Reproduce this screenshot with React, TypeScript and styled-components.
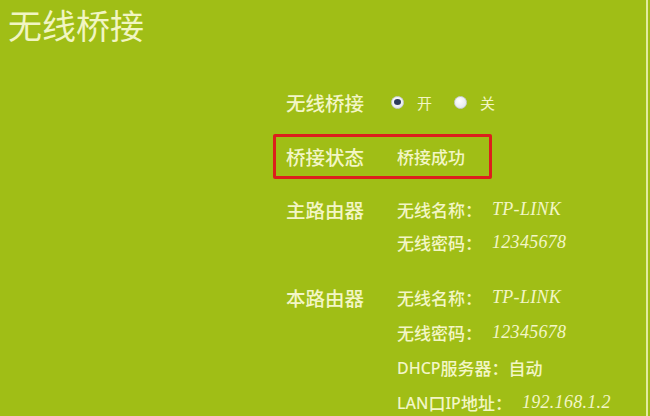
import React from "react";
import styled, { createGlobalStyle } from "styled-components";

const Global = createGlobalStyle`
  html, body { margin: 0; padding: 0; }
  body {
    width: 650px;
    height: 416px;
    overflow: hidden;
    background: #a0be16;
    font-family: "Noto Sans CJK SC", "Noto Sans", sans-serif;
  }
`;

const Page = styled.div`
  width: 646px;
  height: 416px;
  border-right: 2px solid #e2eba0;
  background: #a0be16;
  color: #f3f6c6;
  display: flex;
  flex-direction: column;
  overflow: hidden;
`;

const Title = styled.h1`
  margin: 0;
  padding-left: 8px;
  line-height: 49px;
  font-size: 34px;
  font-weight: 400;
  color: #f1f5c2;
`;

const Form = styled.div`
  margin-top: 36px;
  padding-left: 273px;
  display: flex;
  flex-direction: column;
`;

const Row = styled.div`
  display: grid;
  grid-template-columns: 105px auto;
  align-items: center;
  height: 34px;
  padding-left: 13px;
`;

const Label = styled.div`
  font-size: 19.5px;
  font-weight: 500;
  white-space: nowrap;
`;

const Radios = styled.div`
  display: flex;
  align-items: center;
  font-size: 15px;
`;

const RadioItem = styled.label`
  display: flex;
  align-items: center;
  margin-right: 22px;
`;

const RadioDot = styled.span<{ $on?: boolean }>`
  width: 13px;
  height: 13px;
  box-sizing: border-box;
  border-radius: 50%;
  background: radial-gradient(circle at 40% 35%, #ffffff, #dfe3e8);
  border: 1px solid #c9ced6;
  margin-right: 13px;
  display: flex;
  align-items: center;
  justify-content: center;
  &::after {
    content: "";
    display: ${(p) => (p.$on ? "block" : "none")};
    width: 7px;
    height: 6px;
    border-radius: 50%;
    background: #2c3b5c;
  }
`;

const StatusBox = styled.div`
  margin-top: 15px;
  width: 219px;
  height: 45px;
  box-sizing: border-box;
  border: 3px solid #dc1f1c;
  border-radius: 2px;
  padding-left: 10px;
  display: grid;
  grid-template-columns: 111px auto;
  align-items: center;
`;

const Value = styled.div`
  font-size: 17px;
  font-weight: 500;
  white-space: nowrap;
`;

const Group = styled.div<{ $top: number; $step: number }>`
  margin-top: ${(p) => p.$top}px;
  padding-left: 13px;
  display: grid;
  grid-template-columns: 111px auto;
  grid-auto-rows: ${(p) => p.$step}px;
  align-items: center;
`;

const Item = styled.div`
  grid-column: 2;
  display: flex;
  align-items: center;
  font-size: 17px;
  font-weight: 500;
  white-space: nowrap;
`;

const Colon = styled.span<{ $tight?: boolean }>`
  margin-right: ${(p) => (p.$tight ? 0 : 10)}px;
`;

const Mono = styled.span`
  font-family: "Liberation Serif", serif;
  font-style: italic;
  font-weight: 400;
  font-size: 18px;
  letter-spacing: 0.3px;
`;

const Latin = styled.span`
  font-family: "Noto Sans", "Liberation Sans", sans-serif;
  font-size: 16px;
`;

type Sub = { name: React.ReactNode; value: React.ReactNode; plain?: boolean };

function RouterGroup({ title, items, top, step }: { title: string; items: Sub[]; top: number; step: number }) {
  return (
    <Group $top={top} $step={step}>
      <Label style={{ gridColumn: 1, gridRow: 1 }}>{title}</Label>
      {items.map((it, i) => (
        <Item key={i} style={{ gridRow: i + 1 }}>
          {it.name}
          <Colon $tight={it.plain}>：</Colon>
          {it.plain ? it.value : <Mono>{it.value}</Mono>}
        </Item>
      ))}
    </Group>
  );
}

export default function App() {
  return (
    <>
      <Global />
      <Page>
        <Title>无线桥接</Title>
        <Form>
          <Row>
            <Label>无线桥接</Label>
            <Radios>
              <RadioItem>
                <RadioDot $on />开
              </RadioItem>
              <RadioItem>
                <RadioDot />关
              </RadioItem>
            </Radios>
          </Row>
          <StatusBox>
            <Label>桥接状态</Label>
            <Value>桥接成功</Value>
          </StatusBox>
          <RouterGroup
            title="主路由器"
            top={14}
            step={33}
            items={[
              { name: "无线名称", value: "TP-LINK" },
              { name: "无线密码", value: "12345678" },
            ]}
          />
          <RouterGroup
            title="本路由器"
            top={21}
            step={35}
            items={[
              { name: "无线名称", value: "TP-LINK" },
              { name: "无线密码", value: "12345678" },
              { name: <><Latin>DHCP</Latin>服务器</>, value: "自动", plain: true },
              { name: <><Latin>LAN</Latin>口<Latin>IP</Latin>地址</>, value: "192.168.1.2" },
            ]}
          />
        </Form>
      </Page>
    </>
  );
}
